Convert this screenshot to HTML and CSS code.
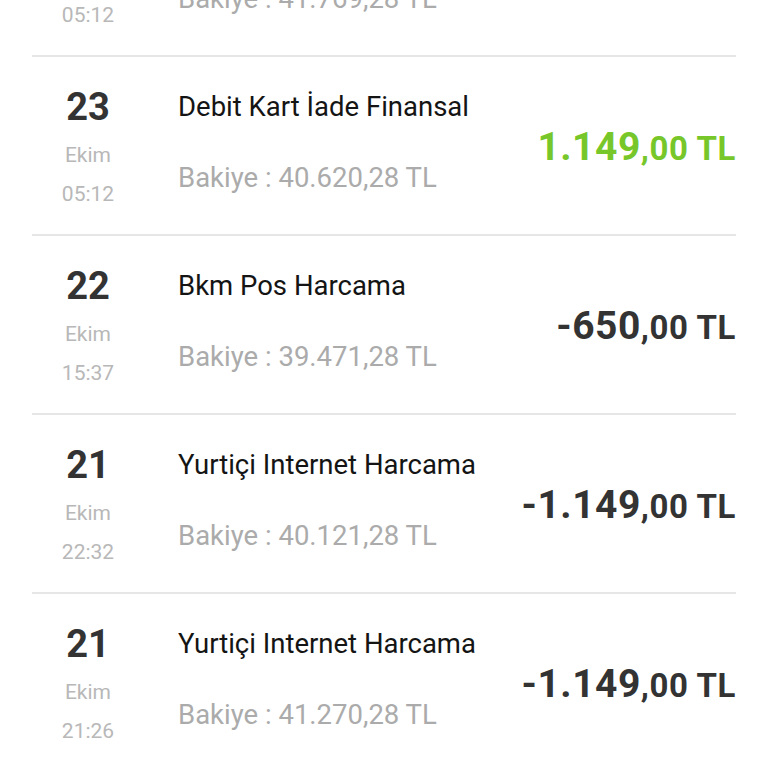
FILE: index.html
```html
<!DOCTYPE html>
<html lang="tr">
<head>
<meta charset="utf-8">
<link rel="stylesheet" href="styles.css">
</head>
<body>
<div class="list">
  <div class="row">
    <div class="date"><div class="day">23</div><div class="month">Ekim</div><div class="time">05:12</div></div>
    <div class="info"><div class="title">Debit Kart İade Finansal</div><div class="balance">Bakiye : 41.769,28 TL</div></div>
    <div class="amount plus"><span class="int">1.149</span><span class="dec">,00 TL</span></div>
  </div>
  <div class="row">
    <div class="date"><div class="day">23</div><div class="month">Ekim</div><div class="time">05:12</div></div>
    <div class="info"><div class="title">Debit Kart İade Finansal</div><div class="balance">Bakiye : 40.620,28 TL</div></div>
    <div class="amount plus"><span class="int">1.149</span><span class="dec">,00 TL</span></div>
  </div>
  <div class="row">
    <div class="date"><div class="day">22</div><div class="month">Ekim</div><div class="time">15:37</div></div>
    <div class="info"><div class="title">Bkm Pos Harcama</div><div class="balance">Bakiye : 39.471,28 TL</div></div>
    <div class="amount"><span class="int">-650</span><span class="dec">,00 TL</span></div>
  </div>
  <div class="row">
    <div class="date"><div class="day">21</div><div class="month">Ekim</div><div class="time">22:32</div></div>
    <div class="info"><div class="title">Yurtiçi Internet Harcama</div><div class="balance">Bakiye : 40.121,28 TL</div></div>
    <div class="amount"><span class="int">-1.149</span><span class="dec">,00 TL</span></div>
  </div>
  <div class="row">
    <div class="date"><div class="day">21</div><div class="month">Ekim</div><div class="time">21:26</div></div>
    <div class="info"><div class="title">Yurtiçi Internet Harcama</div><div class="balance">Bakiye : 41.270,28 TL</div></div>
    <div class="amount"><span class="int">-1.149</span><span class="dec">,00 TL</span></div>
  </div>
</div>
</body>
</html>
```
FILE: styles.css
```css
html, body {
  margin: 0;
  padding: 0;
  background: #ffffff;
  overflow: hidden;
}
body {
  font-family: Roboto, "Liberation Sans", sans-serif;
  width: 768px;
  height: 768px;
}
.list {
  margin: -122px 32px 0 32px;
}
.row {
  display: flex;
  align-items: flex-start;
  height: 177px;
  border-bottom: 2px solid #e6e6e6;
}
.date {
  width: 112px;
  flex: none;
  padding-top: 26px;
  text-align: center;
}
.day {
  font-size: 38px;
  font-weight: 700;
  line-height: 48px;
  color: #333333;
}
.month {
  margin-top: 5px;
  font-size: 21px;
  line-height: 39px;
  color: #b8b8b8;
}
.time {
  font-size: 21px;
  line-height: 39px;
  color: #b8b8b8;
}
.info {
  flex: 1;
  padding-top: 26px;
  padding-left: 34px;
}
.title {
  font-size: 27.5px;
  line-height: 48px;
  color: #141414;
}
.balance {
  margin-top: 27px;
  font-size: 27.5px;
  line-height: 40px;
  color: #ababab;
}
.amount {
  flex: none;
  padding-top: 70px;
  line-height: 40px;
  font-weight: 700;
  color: #333333;
  white-space: nowrap;
}
.amount.plus {
  color: #77c72b;
}
.int {
  font-size: 39px;
  letter-spacing: 0.5px;
}
.dec {
  font-size: 33px;
  letter-spacing: 0.6px;
}
```
